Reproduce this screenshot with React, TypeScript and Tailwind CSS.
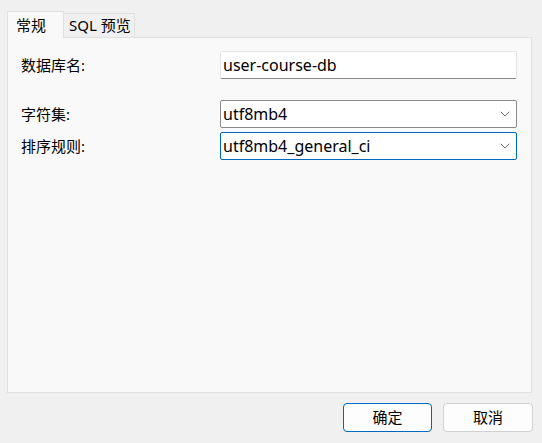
import { ChevronDown } from "lucide-react";

const font = "font-['Noto_Sans','Noto_Sans_CJK_SC',sans-serif]";

function Select({ value, focused }: { value: string; focused?: boolean }) {
  return (
    <div
      className={
        focused
          ? "flex h-[28px] w-[297px] items-center justify-between rounded-[2px] border border-[#0067c0] bg-white pl-[2px] pr-[3px]"
          : "flex h-[28px] w-[297px] items-center justify-between rounded-[2px] border border-[#8a8a8a] bg-white pl-[2px] pr-[3px]"
      }
    >
      <span className="text-[16px] leading-none text-black">{value}</span>
      <ChevronDown className="h-[16px] w-[16px] text-[#444]" strokeWidth={1.2} />
    </div>
  );
}

export default function App() {
  return (
    <div className={`flex h-[443px] w-[542px] flex-col bg-[#f0f0f0] ${font} text-black`}>
      {/* tabs */}
      <div className="flex items-end pl-[7px] pt-[11px]">
        <div className="relative z-10 -mb-px flex h-[27px] w-[57px] items-start border border-b-0 border-[#e0e0e0] bg-[#f9f9f9] pl-[8px] pt-[2px] text-[15px]">
          常规
        </div>
        <div className="flex h-[24px] w-[71px] items-center border border-l-0 border-b-0 border-[#e0e0e0] bg-[#f0f0f0] pl-[5px] text-[15px]">
          SQL 预览
        </div>
      </div>

      {/* panel */}
      <div className="mx-[7px] h-[356px] w-[525px] border border-[#e0e0e0] bg-[#f9f9f9] pl-[13px] pr-[14px] pt-[13px]">
        <div className="flex items-center justify-between">
          <span className="text-[15px]">数据库名:</span>
          <div className="flex h-[28px] w-[297px] items-center rounded-[2px] border border-[#e5e5e5] border-b-[#868686] bg-white pl-[2px]">
            <span className="text-[16px] leading-none">user-course-db</span>
          </div>
        </div>
        <div className="mt-[21px] flex items-center justify-between">
          <span className="text-[15px]">字符集:</span>
          <Select value="utf8mb4" />
        </div>
        <div className="mt-[4px] flex items-center justify-between">
          <span className="text-[15px]">排序规则:</span>
          <Select value="utf8mb4_general_ci" focused />
        </div>
      </div>

      {/* buttons */}
      <div className="mt-[10px] flex justify-end gap-[11px] pr-[9px]">
        <button className="h-[29px] w-[89px] rounded-[4px] border border-[#0067c0] bg-[#fdfdfd] text-[15px]">
          确定
        </button>
        <button className="h-[29px] w-[90px] rounded-[4px] border border-[#d0d0d0] bg-[#fdfdfd] text-[15px]">
          取消
        </button>
      </div>
    </div>
  );
}
